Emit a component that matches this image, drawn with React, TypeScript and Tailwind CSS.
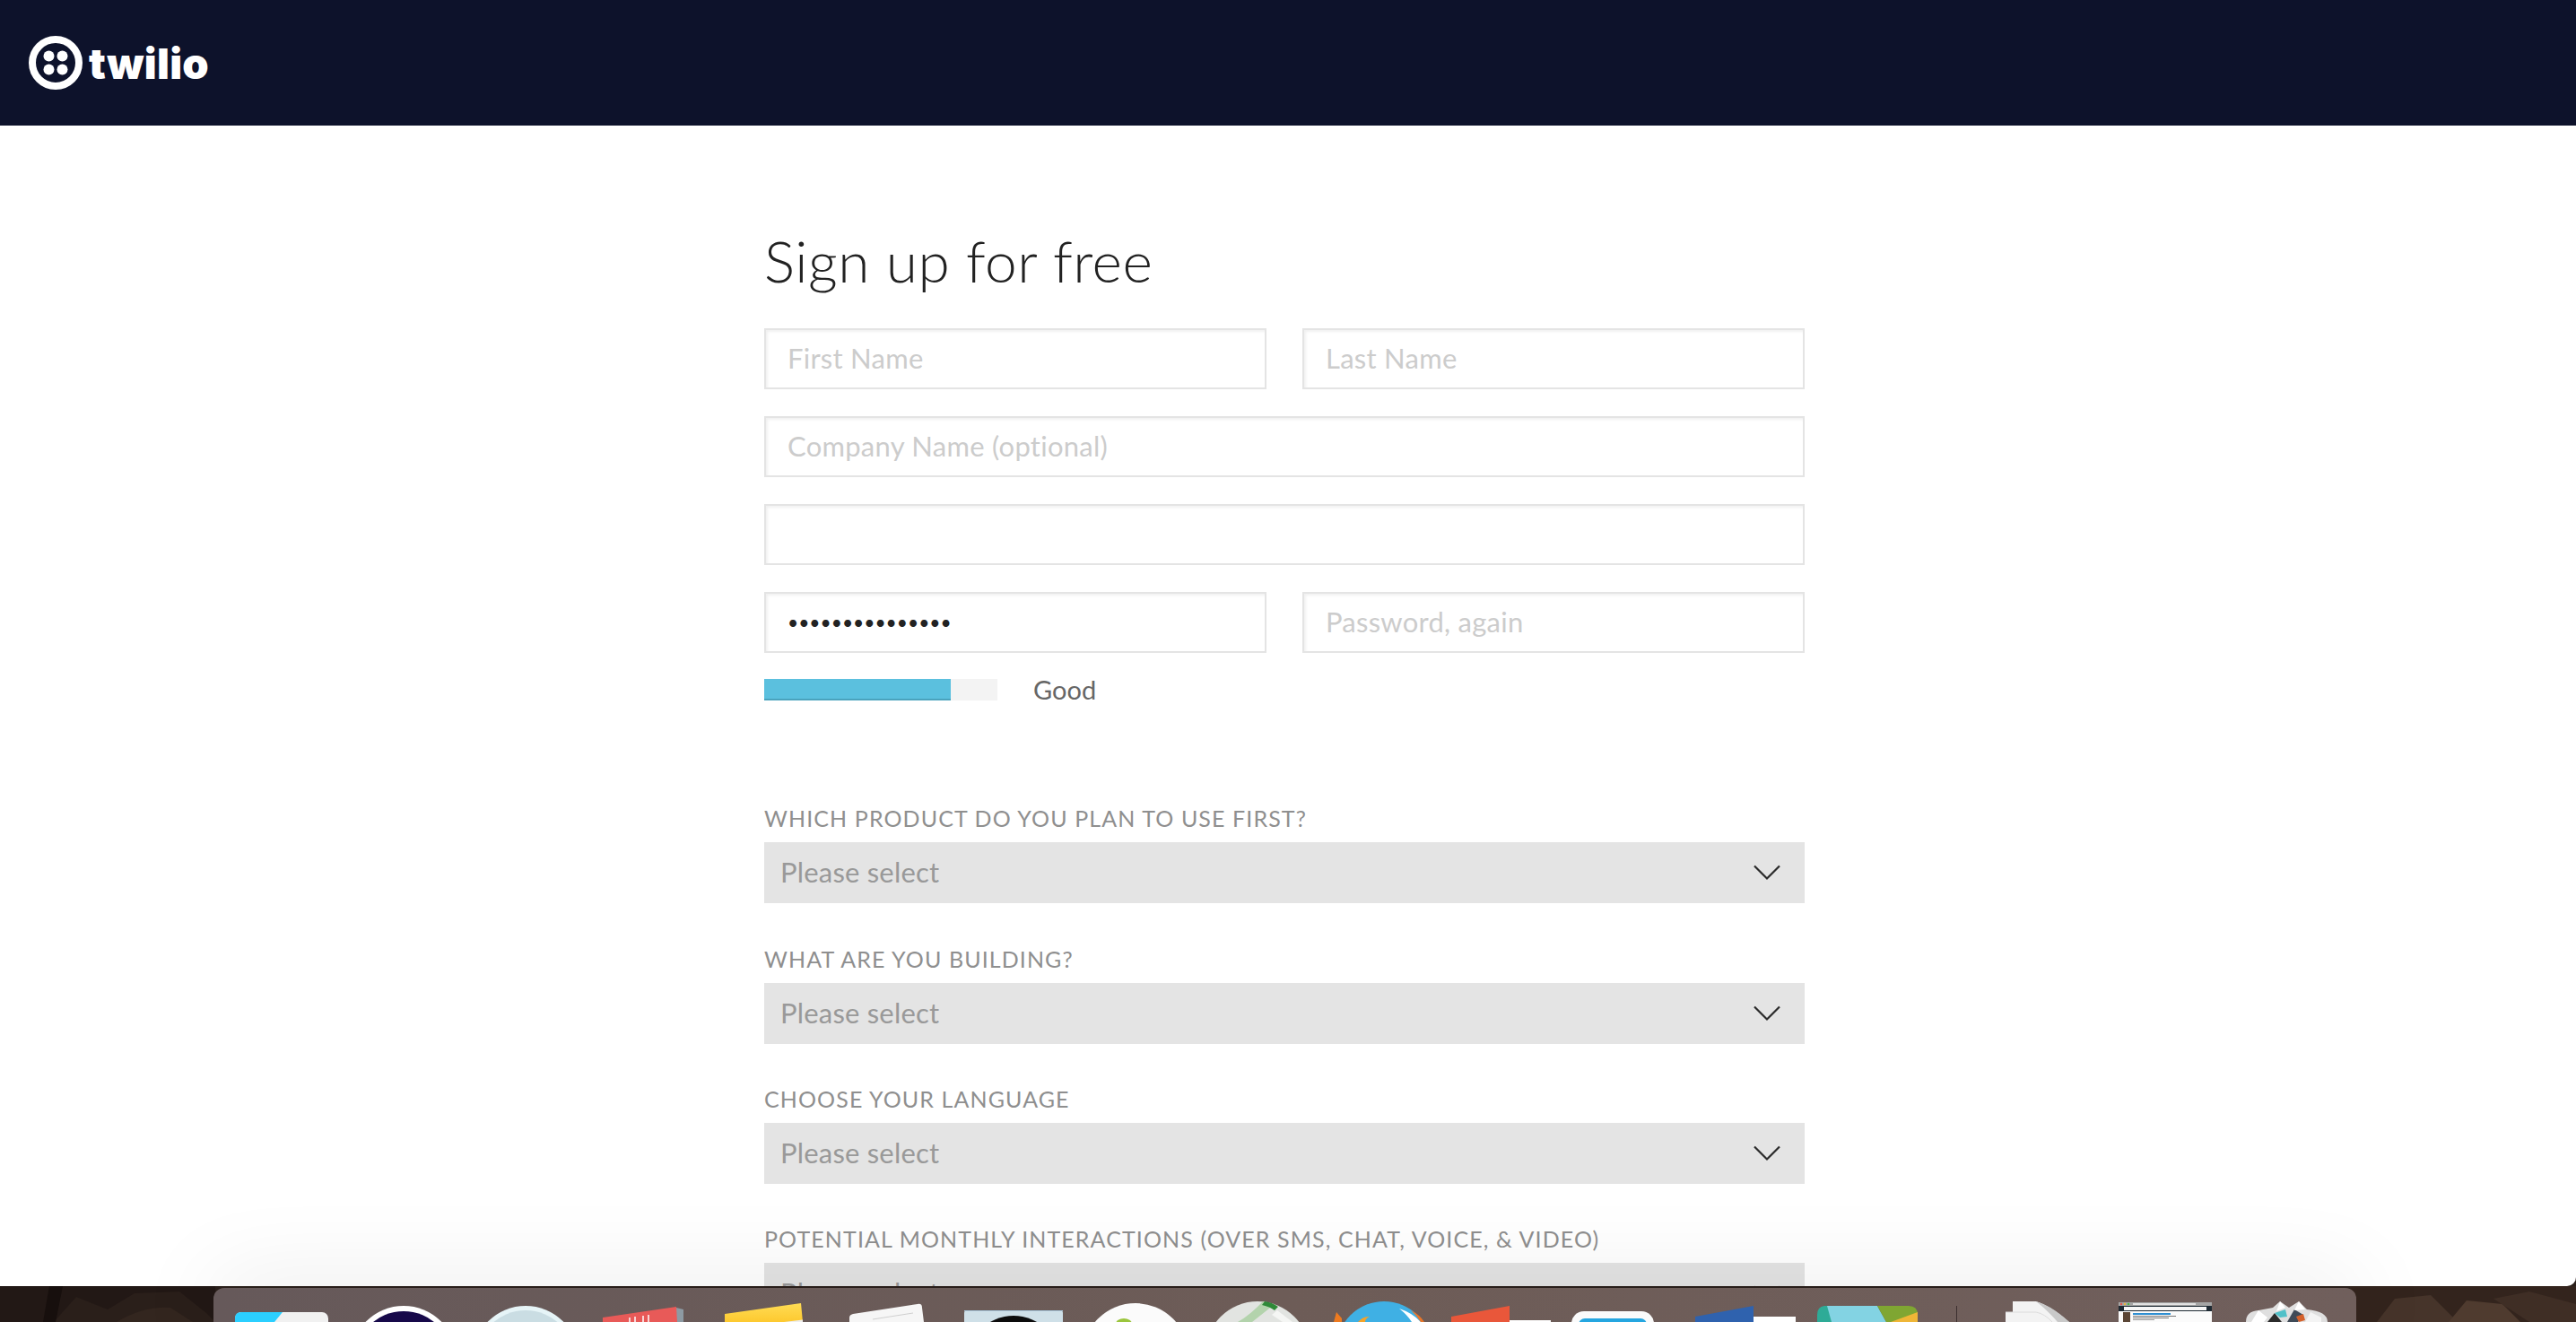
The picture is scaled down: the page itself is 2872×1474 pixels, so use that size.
import React from 'react';

const SELECTS = [
  'WHICH PRODUCT DO YOU PLAN TO USE FIRST?',
  'WHAT ARE YOU BUILDING?',
  'CHOOSE YOUR LANGUAGE',
  'POTENTIAL MONTHLY INTERACTIONS (OVER SMS, CHAT, VOICE, & VIDEO)',
];

const inputClass =
  "h-[68px] w-full border-2 border-[#e4e4e4] bg-white px-[24px] pb-[2px] text-[#222] shadow-[inset_2px_2px_3px_rgba(0,0,0,0.06)] outline-none placeholder:text-[#cccccc]";
const textClass = 'text-[31px] tracking-[0.25px]';

const Logo: React.FC = () => (
  <div className="flex items-center">
    <svg width="60" height="60" viewBox="0 0 60 60" className="ml-[32px]">
      <circle cx="30" cy="30" r="26" fill="none" stroke="#fff" strokeWidth="8" />
      <circle cx="22.5" cy="22.5" r="6" fill="#fff" />
      <circle cx="37.5" cy="22.5" r="6" fill="#fff" />
      <circle cx="22.5" cy="37.5" r="6" fill="#fff" />
      <circle cx="37.5" cy="37.5" r="6" fill="#fff" />
    </svg>
    <span className="ml-[7px] font-['Inter',sans-serif] text-[47px] leading-none font-black tracking-[0.3px] text-white">
      twilio
    </span>
  </div>
);

const SelectField: React.FC<{ label: string; className?: string }> = ({ label, className }) => (
  <div className={className}>
    <div className="mb-[11px] text-[25px] leading-[32px] tracking-[1.1px] whitespace-nowrap text-[#8f8f8f]">{label}</div>
    <div className="flex h-[68px] items-center justify-between bg-[#e4e4e4] pr-[27px] pb-[1px] pl-[18px] text-[31px] tracking-[0.2px] text-[#999]">
      <span>Please select</span>
      <svg width="30" height="18" viewBox="0 0 30 18" fill="none" stroke="#2a2a2a" strokeWidth="2.2">
        <path d="M1 1.5 L15 15.5 L29 1.5" />
      </svg>
    </div>
  </div>
);

// one slot of the dock, cropped by the bottom of the screen
const Slot: React.FC<{ children: React.ReactNode; width?: number }> = ({ children, width = 136 }) => (
  <svg width={width} height="38" viewBox={`0 0 ${width} 38`} className="shrink-0">
    {children}
  </svg>
);

const Dock: React.FC = () => (
  <div className="absolute top-[1436px] left-[238px] flex h-[38px] w-[2389px] overflow-hidden rounded-t-[12px] bg-linear-to-r from-[#66595a] via-[#6d5c57] to-[#705f5c] pl-[8px] shadow-[0_0_100px_rgba(0,0,0,0.13)]">
    <Slot>
      <rect x="16" y="27" width="104" height="40" rx="7" fill="#f1f1f1" />
      <path d="M23 27 H69 L60 38 H16 V34 Q16 27 23 27 Z" fill="#2bcfff" />
    </Slot>
    <Slot>
      <circle cx="68" cy="79" r="59" fill="#fff" />
      <circle cx="68" cy="80" r="54" fill="#17094a" />
    </Slot>
    <Slot>
      <circle cx="68" cy="79" r="59" fill="#e6f4f7" />
      <circle cx="68" cy="80" r="55" fill="#cadde3" />
    </Slot>
    <Slot>
      <path d="M100 22 L108 24 V38 H100 Z" fill="#8d9aa3" />
      <path d="M18 33 L100 21 L101 38 H18 Z" fill="#e85a58" />
      <path d="M48 33 V38 M54 32 V38 M63 31 V38 M69 30 V38" stroke="#fff" strokeWidth="1.5" />
    </Slot>
    <Slot>
      <defs>
        <linearGradient id="note" x1="0" y1="0" x2="0" y2="1">
          <stop offset="0" stopColor="#ffdc55" />
          <stop offset="1" stopColor="#fdc92f" />
        </linearGradient>
      </defs>
      <path d="M18 29 L103 17 L105 38 H18 Z" fill="url(#note)" />
      <path d="M84 38 L105 35.5 V38 Z" fill="#eee" />
    </Slot>
    <Slot>
      <path d="M25 29 L97 18 Q102 17 102 22 L104 38 H21 V33 Q21 30 25 29 Z" fill="#f6f6f6" />
      <path d="M47 35 L92 28" stroke="#cfcfcf" strokeWidth="1" />
    </Slot>
    <Slot>
      <rect x="13" y="25" width="110" height="30" rx="3" fill="#cfe0e8" />
      <rect x="13" y="25" width="110" height="1" fill="#a9c8dd" />
      <circle cx="68" cy="83" r="52" fill="#0c0c0c" />
    </Slot>
    <Slot>
      <circle cx="68" cy="76" r="59" fill="#fbfbfb" />
      <ellipse cx="55" cy="40" rx="9" ry="6" fill="#9bc53d" />
    </Slot>
    <Slot>
      <circle cx="68" cy="73" r="58" fill="#e2e4e1" />
      <path d="M74 15 Q80 16 86 19 L62 38 H46 Q60 30 74 15 Z" fill="#b3d3ac" />
      <path d="M76 15 Q84 16 91 21 L87 25 Q82 21 73 19 Z" fill="#2f8a38" />
      <path d="M90 25 L107 38 H96 L84 30 Z" fill="#f5f6f4" />
    </Slot>
    <Slot>
      <path d="M17 38 L20 27 L26 34 L26 38 Z" fill="#ee7a1f" />
      <circle cx="73" cy="68" r="53" fill="#3fb0e4" />
      <path d="M44 38 Q50 31 57 32 Q52 34 52 38 Z" fill="#f3a32a" />
      <path d="M90 23 Q105 28 114 38 H104 Q99 30 90 23 Z" fill="#fff" />
      <path d="M103 25 Q113 30 118 38 H114 Q110 31 103 25 Z" fill="#e9762a" />
    </Slot>
    <Slot>
      <path d="M12 32 L77 20 V38 H12 Z" fill="#e9573a" />
      <rect x="77" y="36" width="46" height="2" fill="#fff" />
    </Slot>
    <Slot>
      <rect x="10" y="26" width="92" height="40" rx="14" fill="#fbfbfb" />
      <rect x="18" y="34" width="76" height="30" rx="7" fill="#25a6e0" />
    </Slot>
    <Slot>
      <path d="M12 32 L77 20 V38 H12 Z" fill="#2f62ae" />
      <rect x="77" y="32" width="47" height="6" fill="#fff" />
    </Slot>
    <Slot>
      <g>
        <path d="M12 38 V30 Q12 21 20 20 H26 L31 38 Z" fill="#2eab97" />
        <path d="M23 20 H79 L89 38 H28 Z" fill="#83d3e3" />
        <path d="M79 20 H114 Q124 20 124 30 V38 H89 Z" fill="#7fa632" />
        <path d="M94 38 L124 27 V38 Z" fill="#efb637" />
      </g>
    </Slot>
    <Slot width={54}>
      <rect x="31" y="20" width="1" height="18" fill="#3d3030" />
    </Slot>
    <Slot>
      <path d="M40 15 H66 Q82 20 103 38 H32 V27 H40 Z" fill="#f3f3f3" />
      <path d="M66 15 Q78 24 90 38 H103 Q84 20 66 15 Z" fill="#c9c9c9" />
      <path d="M32 27 H66 Q76 29 84 38" fill="none" stroke="#dcdcdc" />
    </Slot>
    <Slot>
      <rect x="22" y="16" width="104" height="22" fill="#fbfbfb" />
      <rect x="22" y="16" width="104" height="4" fill="#a5a5a5" />
      <circle cx="25" cy="18" r="1.2" fill="#e5544b" />
      <circle cx="29" cy="18" r="1.2" fill="#e8b53b" />
      <circle cx="33" cy="18" r="1.2" fill="#4cb848" />
      <rect x="38" y="17" width="70" height="2" fill="#e2e2e2" />
      <rect x="22" y="20" width="104" height="6" fill="#1e2a33" />
      <rect x="28" y="21" width="92" height="4" fill="#f7f7f7" />
      <rect x="38" y="28" width="42" height="2" fill="#2f8fd1" />
      <rect x="38" y="31" width="48" height="1" fill="#777" />
      <rect x="38" y="33" width="40" height="1" fill="#777" />
      <rect x="38" y="35" width="24" height="1" fill="#999" />
      <rect x="27" y="27" width="8" height="11" fill="#5b4636" />
    </Slot>
    <Slot>
      <path d="M28 38 Q28 26 42 25 L58 22 L66 15 L76 22 L87 15 L96 24 Q119 26 119 38 Z" fill="#dfdfdf" />
      <path d="M34 38 L42 25 L52 33 L48 38 Z" fill="#fff" />
      <path d="M52 38 L60 28 L68 38 Z" fill="#2b2b2b" />
      <path d="M60 28 L72 24 L74 32 L66 33 Z" fill="#4fc0c8" />
      <path d="M74 38 L82 24 L92 30 L86 38 Z" fill="#3f4a57" />
      <path d="M84 32 L92 29 L94 36 L87 38 Z" fill="#d5622c" />
      <path d="M94 38 L100 27 L112 33 L112 38 Z" fill="#f4f4f4" />
      <path d="M66 15 L62 26 L72 22 Z M87 15 L82 25 L94 24 Z" fill="#fff" />
    </Slot>
  </div>
);

const App: React.FC = () => {
  return (
    <div className="relative h-[1474px] overflow-hidden bg-[#2a1f1a] font-['Lato',sans-serif]">
      {/* desktop wallpaper showing under the browser window */}
      <svg className="absolute bottom-0 left-0" width="2872" height="40" viewBox="0 0 2872 40">
        <rect width="240" height="40" fill="#221815" />
        <path d="M60 40 L85 12 L120 26 L150 8 L200 6 L230 30 L240 40 Z" fill="#2a1f1a" />
        <path d="M130 40 Q160 22 190 24 L215 40 Z" fill="#33261f" />
        <path d="M55 0 L48 40 L62 40 L70 0 Z" fill="#170f0d" />
        <rect x="2620" width="252" height="40" fill="#33241d" />
        <path d="M2650 40 L2670 14 L2710 10 L2740 40 Z" fill="#46342a" />
        <path d="M2730 40 L2750 16 L2790 20 L2810 40 Z" fill="#4f3b2f" />
        <path d="M2780 14 L2820 6 L2872 20 V40 H2820 Z" fill="#3f2e25" />
      </svg>

      <div className="relative h-[1434px] overflow-hidden rounded-br-[10px] bg-white">
        <header className="flex h-[140px] items-center bg-[#0d122b]">
          <Logo />
        </header>

        <main className="ml-[852px] w-[1160px]">
          <h1 className="pt-[113px] text-[64px] leading-[76px] font-light tracking-[0.5px] text-[#222]">
            Sign up for free
          </h1>

          <form className="mt-[37px] flex flex-col gap-[30px]">
            <div className="grid grid-cols-2 gap-[40px]">
              <input className={`${inputClass} ${textClass}`} placeholder="First Name" />
              <input className={`${inputClass} ${textClass}`} placeholder="Last Name" />
            </div>
            <input className={`${inputClass} ${textClass}`} placeholder="Company Name (optional)" />
            <input className={`${inputClass} ${textClass}`} />
            <div className="grid grid-cols-2 gap-[40px]">
              <input className={`${inputClass} text-[21px]`} type="password" defaultValue="aaaaaaaaaaaaaaa" />
              <input className={`${inputClass} ${textClass}`} placeholder="Password, again" />
            </div>
          </form>

          <div className="mt-[29px] flex h-[24px] items-center">
            <div className="h-[24px] w-[260px] bg-[#f3f3f3]">
              <div className="h-[24px] w-[208px] border-b-2 border-[#4aa3bd] bg-[#5bc0de]" />
            </div>
            <span className="ml-[40px] text-[29px] text-[#666]">Good</span>
          </div>

          <div className="mt-[115px] flex flex-col gap-[45px]">
            {SELECTS.map((label, index) => (
              <SelectField key={label} label={label} className={index === 0 ? 'mb-px' : ''} />
            ))}
          </div>
        </main>
      </div>

      <Dock />
    </div>
  );
};

export default App;
